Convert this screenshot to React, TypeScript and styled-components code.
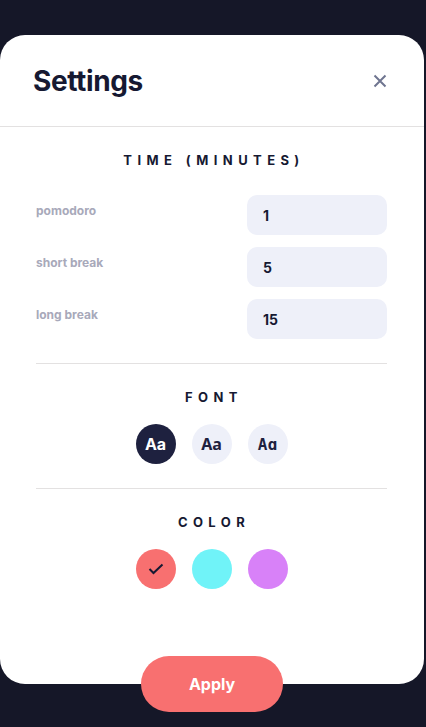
import React from "react";
import styled, { createGlobalStyle } from "styled-components";

const Global = createGlobalStyle`
  html, body { margin: 0; padding: 0; background: #151728; }
  body { font-family: "Inter", "Noto Sans", sans-serif; }
  * { box-sizing: border-box; }
`;

const Page = styled.div`
  width: 426px;
  height: 727px;
  padding-top: 35px;
  overflow: hidden;
`;

const Card = styled.div`
  position: relative;
  width: 424px;
  height: 649px;
  background: #ffffff;
  border-radius: 25px;
`;

const Header = styled.div`
  height: 92px;
  display: flex;
  align-items: center;
  justify-content: space-between;
  padding: 0 37px 0 33px;
  border-bottom: 1px solid #e3e1e1;
`;

const Title = styled.h1`
  margin: 0;
  font-size: 28px;
  font-weight: 700;
  color: #161932;
  letter-spacing: -0.4px;
`;

const CloseButton = styled.button`
  border: 0;
  background: none;
  padding: 0;
  width: 14px;
  height: 14px;
  display: flex;
  cursor: pointer;
`;

const Section = styled.section<{ $divider?: boolean }>`
  margin: 0 37px 0 36px;
  padding: 24px 0 24px;
  border-bottom: ${(p) => (p.$divider ? "1px solid #e3e1e1" : "none")};
  display: flex;
  flex-direction: column;
  align-items: center;
`;

const SectionTitle = styled.h2<{ $gap: number }>`
  margin: -1px 0 ${(p) => p.$gap}px;
  font-size: 13px;
  line-height: 20px;
  font-weight: 700;
  letter-spacing: 5.4px;
  color: #161932;
  text-align: center;
  padding-left: 5px;
`;

const Rows = styled.div`
  width: 100%;
  display: flex;
  flex-direction: column;
  gap: 12px;
`;

const Row = styled.label`
  display: flex;
  justify-content: space-between;
  align-items: flex-start;
`;

const RowLabel = styled.span`
  margin-top: 8px;
  font-size: 12px;
  line-height: 16px;
  font-weight: 700;
  color: #a8a9ba;
`;

const NumberBox = styled.div`
  width: 140px;
  height: 40px;
  border-radius: 10px;
  background: #eef0f9;
  display: flex;
  align-items: center;
  padding-left: 16px;
  font-size: 14px;
  font-weight: 700;
  color: #161932;
`;

const Choices = styled.div`
  display: flex;
  gap: 16px;
`;

const FontChoice = styled.button<{ $active?: boolean; $family: string }>`
  width: 40px;
  height: 40px;
  border-radius: 50%;
  border: 0;
  padding: 0;
  background: ${(p) => (p.$active ? "#1e213f" : "#eef0f9")};
  color: ${(p) => (p.$active ? "#ffffff" : "#1e213f")};
  font-family: ${(p) => p.$family};
  font-size: 16px;
  font-weight: 700;
  display: flex;
  align-items: center;
  justify-content: center;
`;

const ColorChoice = styled.button<{ $color: string }>`
  width: 40px;
  height: 40px;
  border-radius: 50%;
  border: 0;
  padding: 0;
  background: ${(p) => p.$color};
  display: flex;
  align-items: center;
  justify-content: center;
`;

const ApplyButton = styled.button`
  position: absolute;
  left: 141px;
  bottom: -28px;
  width: 142px;
  height: 56px;
  border-radius: 28px;
  border: 0;
  background: #f87070;
  color: #ffffff;
  font-family: "Inter", "Noto Sans", sans-serif;
  font-size: 16px;
  font-weight: 700;
  cursor: pointer;
`;

const rows = [
  { label: "pomodoro", value: "1" },
  { label: "short break", value: "5" },
  { label: "long break", value: "15" },
];

const fonts = [
  { family: `"Inter", sans-serif`, text: "Aa", active: true },
  { family: `"Noto Sans", sans-serif`, text: "Aa" },
  { family: `"DejaVu Sans Mono", monospace`, text: "Aɑ" },
];

const colors = ["#f87070", "#70f3f8", "#d881f8"];

export default function App() {
  return (
    <Page>
      <Global />
      <Card>
        <Header>
          <Title>Settings</Title>
          <CloseButton aria-label="close">
            <svg width="14" height="14" viewBox="0 0 14 14">
              <path
                d="M1.5 1.5 L12.5 12.5 M12.5 1.5 L1.5 12.5"
                stroke="#6f7590"
                strokeWidth="2"
                fill="none"
              />
            </svg>
          </CloseButton>
        </Header>

        <Section $divider>
          <SectionTitle $gap={25}>TIME (MINUTES)</SectionTitle>
          <Rows>
            {rows.map((r) => (
              <Row key={r.label}>
                <RowLabel>{r.label}</RowLabel>
                <NumberBox>{r.value}</NumberBox>
              </Row>
            ))}
          </Rows>
        </Section>

        <Section $divider>
          <SectionTitle $gap={17}>FONT</SectionTitle>
          <Choices>
            {fonts.map((f, i) => (
              <FontChoice key={i} $active={f.active} $family={f.family}>
                {f.text}
              </FontChoice>
            ))}
          </Choices>
        </Section>

        <Section>
          <SectionTitle $gap={17}>COLOR</SectionTitle>
          <Choices>
            {colors.map((c, i) => (
              <ColorChoice key={c} $color={c}>
                {i === 0 && (
                  <svg width="16" height="12" viewBox="0 0 16 12">
                    <path
                      d="M1.5 6 L5.5 10 L14.5 1.5"
                      stroke="#161932"
                      strokeWidth="2"
                      fill="none"
                    />
                  </svg>
                )}
              </ColorChoice>
            ))}
          </Choices>
        </Section>

        <ApplyButton>Apply</ApplyButton>
      </Card>
    </Page>
  );
}
